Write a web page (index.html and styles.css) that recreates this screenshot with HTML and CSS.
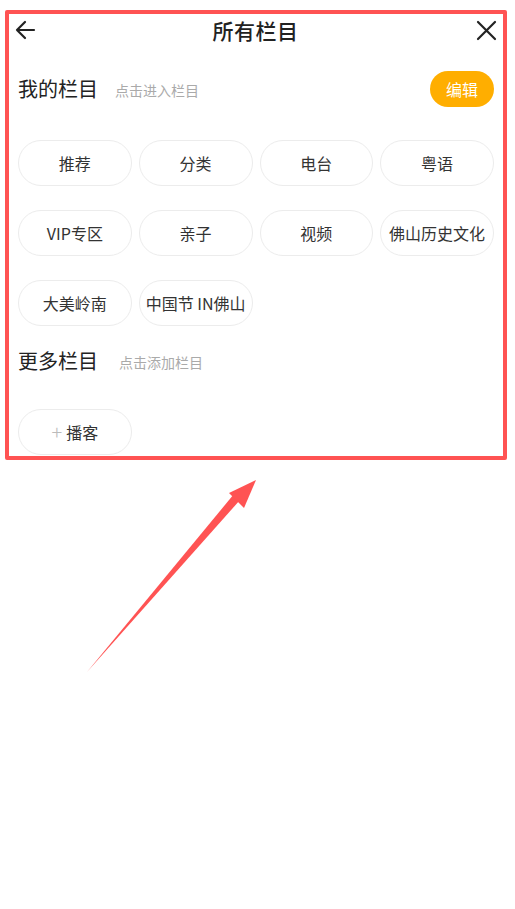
FILE: index.html
```html
<!DOCTYPE html>
<html lang="zh">
<head>
<meta charset="utf-8">
<title>所有栏目</title>
<link rel="stylesheet" href="styles.css">
</head>
<body>
<div class="page">
  <header class="topbar">
    <svg class="icon" width="22" height="22" viewBox="0 0 22 22"><path d="M20 11H3M11 3L3 11L11 19" fill="none" stroke="#222" stroke-width="2.2" stroke-linecap="round" stroke-linejoin="round"/></svg>
    <h1 class="title">所有栏目</h1>
    <svg class="icon" width="22" height="22" viewBox="0 0 22 22"><path d="M3 3L20 20M20 3L3 20" fill="none" stroke="#222" stroke-width="2.2" stroke-linecap="round"/></svg>
  </header>

  <section class="sec">
    <div class="sec-head">
      <span class="sec-title">我的栏目</span>
      <span class="sec-hint">点击进入栏目</span>
      <button class="edit">编辑</button>
    </div>
    <div class="chips">
      <div class="chip">推荐</div>
      <div class="chip">分类</div>
      <div class="chip">电台</div>
      <div class="chip">粤语</div>
      <div class="chip">VIP专区</div>
      <div class="chip">亲子</div>
      <div class="chip">视频</div>
      <div class="chip">佛山历史文化</div>
      <div class="chip">大美岭南</div>
      <div class="chip">中国节 IN佛山</div>
    </div>
  </section>

  <section class="sec sec-more">
    <div class="sec-head">
      <span class="sec-title">更多栏目</span>
      <span class="sec-hint hint-more">点击添加栏目</span>
    </div>
    <div class="chips chips-more">
      <div class="chip"><span class="plus">+</span>播客</div>
    </div>
  </section>
</div>

<div class="frame"></div>
<svg class="pointer" width="515" height="909" viewBox="0 0 515 909">
  <path d="M87 672 L234 494 L240 500 Z" fill="#ff5353"/>
  <path d="M256 480 L229 493 L244 508 Z" fill="#ff5353"/>
</svg>
</body>
</html>
```

FILE: styles.css
```css
* { box-sizing: border-box; }
html, body { margin: 0; padding: 0; background: #fff; }
body {
  width: 515px;
  height: 909px;
  position: relative;
  overflow: hidden;
  font-family: "Noto Sans CJK SC", "Noto Sans", sans-serif;
  color: #222;
}
.page { display: flex; flex-direction: column; }
.topbar {
  height: 60px;
  display: flex;
  align-items: center;
  justify-content: space-between;
  padding: 0 18px 0 14px;
}
.icon { display: block; }
.title {
  margin: 0;
  font-size: 21px;
  line-height: 24px;
  font-weight: 500;
  color: #222;
  letter-spacing: 0.5px;
}
.sec { padding: 0 21px 0 18px; }
.sec-head {
  margin-top: 11px;
  height: 36px;
  display: flex;
  align-items: center;
}
.sec-title { font-size: 20px; line-height: 24px; color: #222; }
.sec-hint { font-size: 14px; line-height: 18px; color: #aaa; margin-left: 17px; margin-top: 1px; }
.hint-more { margin-left: 21px; }
.edit {
  margin-left: auto;
  width: 64px;
  height: 36px;
  border: none;
  border-radius: 18px;
  background: #ffae00;
  color: #fff;
  font-family: inherit;
  font-size: 16px;
  padding: 0;
}
.chips {
  margin-top: 33px;
  display: grid;
  grid-template-columns: repeat(4, 1fr);
  column-gap: 7px;
  row-gap: 24px;
}
.chip {
  height: 46px;
  border: 1px solid #ececec;
  border-radius: 23px;
  display: flex;
  align-items: center;
  justify-content: center;
  font-size: 16px;
  color: #333;
  white-space: nowrap;
}
.sec-more .sec-head { margin-top: 17px; }
.chips-more { margin-top: 30px; }
.plus { color: #bbb; font-size: 20px; font-weight: 300; margin-right: 4px; line-height: 1; }
.frame {
  position: absolute;
  left: 5px;
  top: 10px;
  width: 502px;
  height: 450px;
  border: 4.5px solid #ff5353;
  border-radius: 2px;
}
.pointer { position: absolute; left: 0; top: 0; }
```
